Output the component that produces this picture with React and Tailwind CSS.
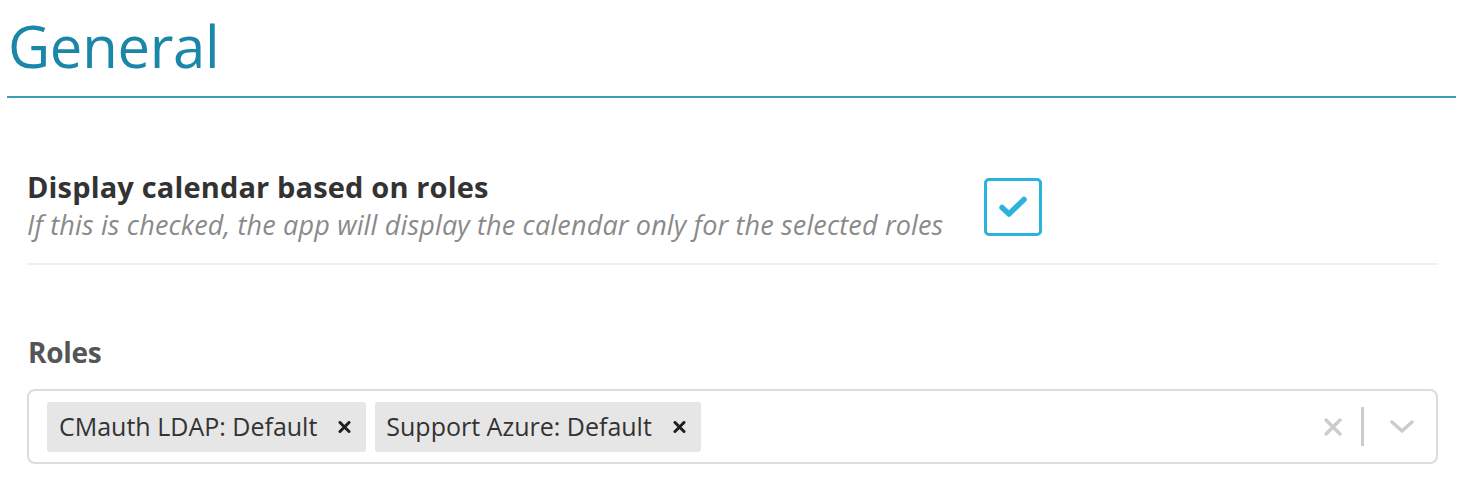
import React from "react";

function TagX() {
  return (
    <svg width="13" height="12" viewBox="0 0 13 12" className="ml-[21px]">
      <path d="M2 1.5 L11 10.5 M11 1.5 L2 10.5" stroke="#1f1f1f" strokeWidth="3" strokeLinecap="round" />
    </svg>
  );
}

export default function App() {
  return (
    <div className="w-[1460px] h-[497px] bg-white overflow-hidden" style={{ fontFamily: '"Open Sans", "Noto Sans", sans-serif' }}>
      <div className="ml-[7px] w-[1449px] border-b-2 border-[#3d9db8] h-[98px] pt-[6px]">
        <h1 className="text-[58px] leading-[80px] text-[#1a86a8] pl-[1px] tracking-[-0.3px]">General</h1>
      </div>

      <div className="ml-[27px] w-[1411px] mt-[70px] border-b-2 border-[#f0f0f0] pb-[19px] flex items-center">
        <div className="w-[957px]">
          <div className="text-[29px] leading-[38px] font-bold text-[#333] tracking-[0.15px]">Display calendar based on roles</div>
          <div className="text-[27px] leading-[38px] italic text-[#8a8a8a] tracking-[0.15px]">If this is checked, the app will display the calendar only for the selected roles</div>
        </div>
        <div className="mt-[2px] w-[58px] h-[58px] border-[3px] border-[#2bb3de] rounded-[5px] flex items-center justify-center">
          <svg width="30" height="24" viewBox="0 0 30 24">
            <path d="M4 12.5 L11 19 L26 4.5" fill="none" stroke="#2bb3de" strokeWidth="5.5" strokeLinecap="round" strokeLinejoin="round" />
          </svg>
        </div>
      </div>

      <div className="ml-[28px] mt-[69px] text-[28px] leading-[36px] font-bold text-[#555] tracking-[-0.3px]">Roles</div>

      <div className="ml-[27px] mt-[19px] w-[1411px] h-[75px] border-2 border-[#dcdcdc] rounded-[8px] flex items-center pl-[18px]">
        <div className="flex-1 flex items-center gap-[9px]">
          <div className="h-[50px] bg-[#e6e6e6] rounded-[3px] flex items-center pl-[12px] pr-[15px] text-[25px] text-[#333]">
            <span>CMauth LDAP: Default</span>
            <TagX />
          </div>
          <div className="h-[50px] bg-[#e6e6e6] rounded-[3px] flex items-center pl-[11px] pr-[15px] text-[25px] text-[#333]">
            <span>Support Azure: Default</span>
            <TagX />
          </div>
        </div>
        <div className="flex items-center h-full">
          <svg width="20" height="20" viewBox="0 0 20 20" className="mr-[18px]">
            <path d="M3 3 L17 17 M17 3 L3 17" stroke="#cccccc" strokeWidth="3.5" strokeLinecap="round" />
          </svg>
          <div className="w-[3px] h-[39px] bg-[#cccccc]" />
          <svg width="24" height="14" viewBox="0 0 24 14" className="ml-[26px] mr-[22px]">
            <path d="M2 2 L12 11 L22 2" fill="none" stroke="#cccccc" strokeWidth="3.5" strokeLinecap="round" strokeLinejoin="round" />
          </svg>
        </div>
      </div>
    </div>
  );
}
